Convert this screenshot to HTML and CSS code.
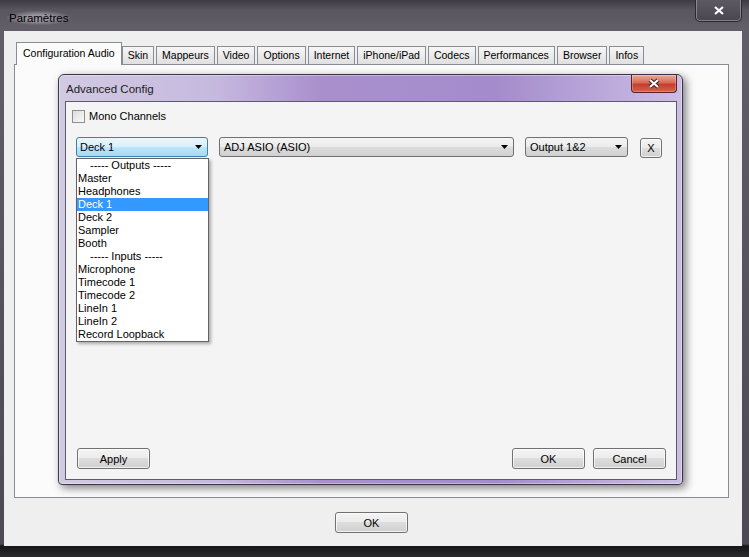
FILE: index.html
```html
<!DOCTYPE html>
<html lang="fr">
<head>
    <meta charset="UTF-8">
    <title>Paramètres</title>
    <link rel="stylesheet" href="styles.css">
</head>
<body>

    <div class="window">
        <div class="titlebar">
            <span class="title">Paramètres</span>
            <button class="win-close">
                <svg width="10" height="9" viewBox="0 0 10 9"><path d="M1 1 L9 8 M9 1 L1 8" stroke="#fff" stroke-width="2.2"/></svg>
            </button>
        </div>
        <div class="client">
            <div class="tabs">
                <div class="tab active">Configuration Audio</div>
                <div class="tab">Skin</div>
                <div class="tab">Mappeurs</div>
                <div class="tab">Video</div>
                <div class="tab">Options</div>
                <div class="tab">Internet</div>
                <div class="tab">iPhone/iPad</div>
                <div class="tab">Codecs</div>
                <div class="tab">Performances</div>
                <div class="tab">Browser</div>
                <div class="tab">Infos</div>
            </div>
            <div class="panel"></div>
            <div class="footer">
                <button class="btn">OK</button>
            </div>
        </div>
    </div>

    <!-- modal window on top of the settings -->
    <div class="dialog">
        <div class="dialog-title">
            <span class="dialog-name">Advanced Config</span>
            <button class="dialog-close">
                <svg width="14" height="11" viewBox="0 0 14 11"><path d="M3 2 L11 9 M11 2 L3 9" stroke="#3a2020" stroke-width="4.2"/><path d="M3 2 L11 9 M11 2 L3 9" stroke="#fff" stroke-width="2.2"/></svg>
            </button>
        </div>
        <div class="dialog-body">
            <label class="check"><span class="check-box"></span>Mono Channels</label>

            <div class="combos">
                <div class="combo combo-deck focused">
                    <span>Deck 1</span>
                    <svg class="arrow" width="7" height="4" viewBox="0 0 7 4"><polygon points="0,0 7,0 3.5,4" fill="#000"/></svg>
                    <ul class="droplist">
                        <li class="sep">----- Outputs -----</li>
                        <li>Master</li>
                        <li>Headphones</li>
                        <li class="selected">Deck 1</li>
                        <li>Deck 2</li>
                        <li>Sampler</li>
                        <li>Booth</li>
                        <li class="sep">----- Inputs -----</li>
                        <li>Microphone</li>
                        <li>Timecode 1</li>
                        <li>Timecode 2</li>
                        <li>LineIn 1</li>
                        <li>LineIn 2</li>
                        <li>Record Loopback</li>
                    </ul>
                </div>
                <div class="combo combo-device">
                    <span>ADJ ASIO (ASIO)</span>
                    <svg class="arrow" width="7" height="4" viewBox="0 0 7 4"><polygon points="0,0 7,0 3.5,4" fill="#000"/></svg>
                </div>
                <div class="combo combo-output">
                    <span>Output 1&amp;2</span>
                    <svg class="arrow" width="7" height="4" viewBox="0 0 7 4"><polygon points="0,0 7,0 3.5,4" fill="#000"/></svg>
                </div>
                <button class="btn btn-x">X</button>
            </div>

            <div class="spacer"></div>

            <div class="actions">
                <button class="btn btn-apply">Apply</button>
                <div class="actions-right">
                    <button class="btn">OK</button>
                    <button class="btn">Cancel</button>
                </div>
            </div>
        </div>
    </div>

</body>
</html>
```

FILE: styles.css
```css
body {
    margin: 0;
    font-family: "Liberation Sans", Arial, sans-serif;
    font-size: 11px;
    color: #000;
}

.window {
    width: 749px;
    height: 557px;
    box-sizing: border-box;
    padding-bottom: 11px;
    background: linear-gradient(to bottom, #3e3a44 0px, #5a5660 10px, #625e68 28px, #56525c 300px, #4e4a54 544px, #161616 546px, #2c2b2e 557px);
    display: flex;
    flex-direction: column;
    overflow: hidden;
}

.titlebar {
    height: 31px;
    flex: none;
    display: flex;
    justify-content: space-between;
    align-items: flex-start;
    padding: 0 7px;
}

.title {
    margin-top: 11px;
    padding: 0 2px;
    line-height: 14px;
    font-size: 11.5px;
    color: #000;
    border-radius: 6px;
    background: radial-gradient(ellipse at center, rgba(170, 165, 178, 0.8) 30%, rgba(120, 115, 128, 0) 75%);
}

.win-close {
    width: 47px;
    height: 23px;
    margin-top: -1px;
    padding: 0;
    border: 1px solid #2a2830;
    border-top: none;
    border-radius: 0 0 5px 5px;
    background: linear-gradient(to bottom, #5e5a64, #4a4650);
    box-shadow: inset 0 0 0 1px rgba(255, 255, 255, 0.3);
    display: flex;
    align-items: center;
    justify-content: center;
}

.client {
    flex: 1;
    margin: 0 7px 0 4px;
    padding: 11px 13px 0 10px;
    background: #efefef;
    display: flex;
    flex-direction: column;
}

.tabs {
    display: flex;
    align-items: flex-end;
    height: 22px;
    padding-left: 2px;
}

.tab {
    height: 18px;
    box-sizing: border-box;
    padding: 0 5px;
    margin-right: 2px;
    border: 1px solid #898c95;
    border-bottom: none;
    background: linear-gradient(to bottom, #f6f6f6, #e0e0e0);
    line-height: 17px;
    font-size: 10.5px;
    white-space: nowrap;
}

.tab.active {
    position: relative;
    height: 23px;
    margin-bottom: -1px;
    margin-right: 0;
    padding: 0 6px;
    background: #fbfbfb;
    line-height: 21px;
}

.panel {
    height: 434px;
    box-sizing: border-box;
    border: 1px solid #898c95;
    background: #fbfbfb;
}

.footer {
    display: flex;
    justify-content: center;
    margin-top: 14px;
}

.btn {
    width: 73px;
    height: 21px;
    padding: 0;
    border: 1px solid #707070;
    border-radius: 3px;
    background: linear-gradient(to bottom, #f4f4f4 0%, #ebebeb 50%, #dddddd 50%, #d0d0d0 100%);
    box-shadow: inset 0 0 0 1px rgba(255, 255, 255, 0.7);
    font-family: "Liberation Sans", Arial, sans-serif;
    font-size: 11px;
    color: #000;
}

/* Advanced Config window */

.dialog {
    position: absolute;
    left: 58px;
    top: 74px;
    width: 625px;
    height: 411px;
    box-sizing: border-box;
    padding: 0 5px 4px 6px;
    border: 1px solid #3a3548;
    border-radius: 6px 6px 4px 4px;
    background: linear-gradient(to right, #d2cae2 0%, #c6b9df 25%, #a990cd 42%, #a48bcb 70%, #bcaadb 88%, #cbbde3 100%);
    box-shadow: 3px 3px 8px rgba(0, 0, 0, 0.5), inset 0 0 0 1px rgba(255, 255, 255, 0.35);
    display: flex;
    flex-direction: column;
}

.dialog-title {
    height: 26px;
    flex: none;
    display: flex;
    justify-content: space-between;
    align-items: flex-start;
}

.dialog-name {
    margin: 7px 0 0 1px;
    line-height: 14px;
    font-size: 11.5px;
    color: #1c1c1c;
}

.dialog-close {
    width: 46px;
    height: 18px;
    padding: 0;
    border: 1px solid #5a2222;
    border-top: none;
    border-radius: 0 0 4px 4px;
    background: linear-gradient(to bottom, #e9a99a 0%, #d86a55 45%, #c4402c 55%, #d2634e 100%);
    box-shadow: inset 0 0 0 1px rgba(255, 255, 255, 0.25);
    display: flex;
    align-items: center;
    justify-content: center;
}

.dialog-body {
    flex: 1;
    border: 1px solid #5c5a6e;
    background: #f4f4f4;
    padding: 8px 10px 10px 10px;
    display: flex;
    flex-direction: column;
}

.check {
    display: flex;
    align-items: center;
    margin-left: -4px;
    height: 13px;
    line-height: 13px;
}

.check-box {
    width: 11px;
    height: 11px;
    margin-right: 4px;
    border: 1px solid #8e8f8f;
    background: linear-gradient(135deg, #dcdcdc, #fafafa);
}

.combos {
    display: flex;
    margin-top: 14px;
    height: 20px;
}

.combo {
    position: relative;
    height: 20px;
    box-sizing: border-box;
    margin-right: 11px;
    padding: 0 5px 0 3px;
    border: 1px solid #707070;
    border-radius: 3px;
    background: linear-gradient(to bottom, #f4f4f4 0%, #ebebeb 50%, #dddddd 50%, #d0d0d0 100%);
    display: flex;
    align-items: center;
    justify-content: space-between;
}

.combo.focused {
    border-color: #3c7fb1;
    background: linear-gradient(to bottom, #eaf6fd 0%, #d9f0fc 50%, #bee6fd 50%, #a7d9f5 100%);
}

.combo-deck {
    width: 132px;
}

.combo-device {
    width: 295px;
    padding-left: 4px;
}

.combo-output {
    width: 103px;
    padding-left: 4px;
    margin-right: 12px;
}

.btn-x {
    width: 22px;
    height: 20px;
    margin-top: 1px;
}

.droplist {
    position: absolute;
    top: 20px;
    left: -1px;
    width: 133px;
    box-sizing: border-box;
    margin: 0;
    padding: 0;
    list-style: none;
    border: 1px solid #646464;
    background: #fff;
    box-shadow: 2px 2px 3px rgba(0, 0, 0, 0.3);
    z-index: 2;
}

.droplist li {
    height: 13px;
    line-height: 13px;
    padding-left: 1px;
    white-space: nowrap;
}

.droplist li.sep {
    padding-left: 13px;
}

.droplist li.selected {
    background: #3399ff;
    color: #fff;
}

.spacer {
    flex: 1;
}

.actions {
    display: flex;
    justify-content: space-between;
}

.btn-apply {
    margin-left: 1px;
}

.actions-right {
    display: flex;
    gap: 8px;
}
```
